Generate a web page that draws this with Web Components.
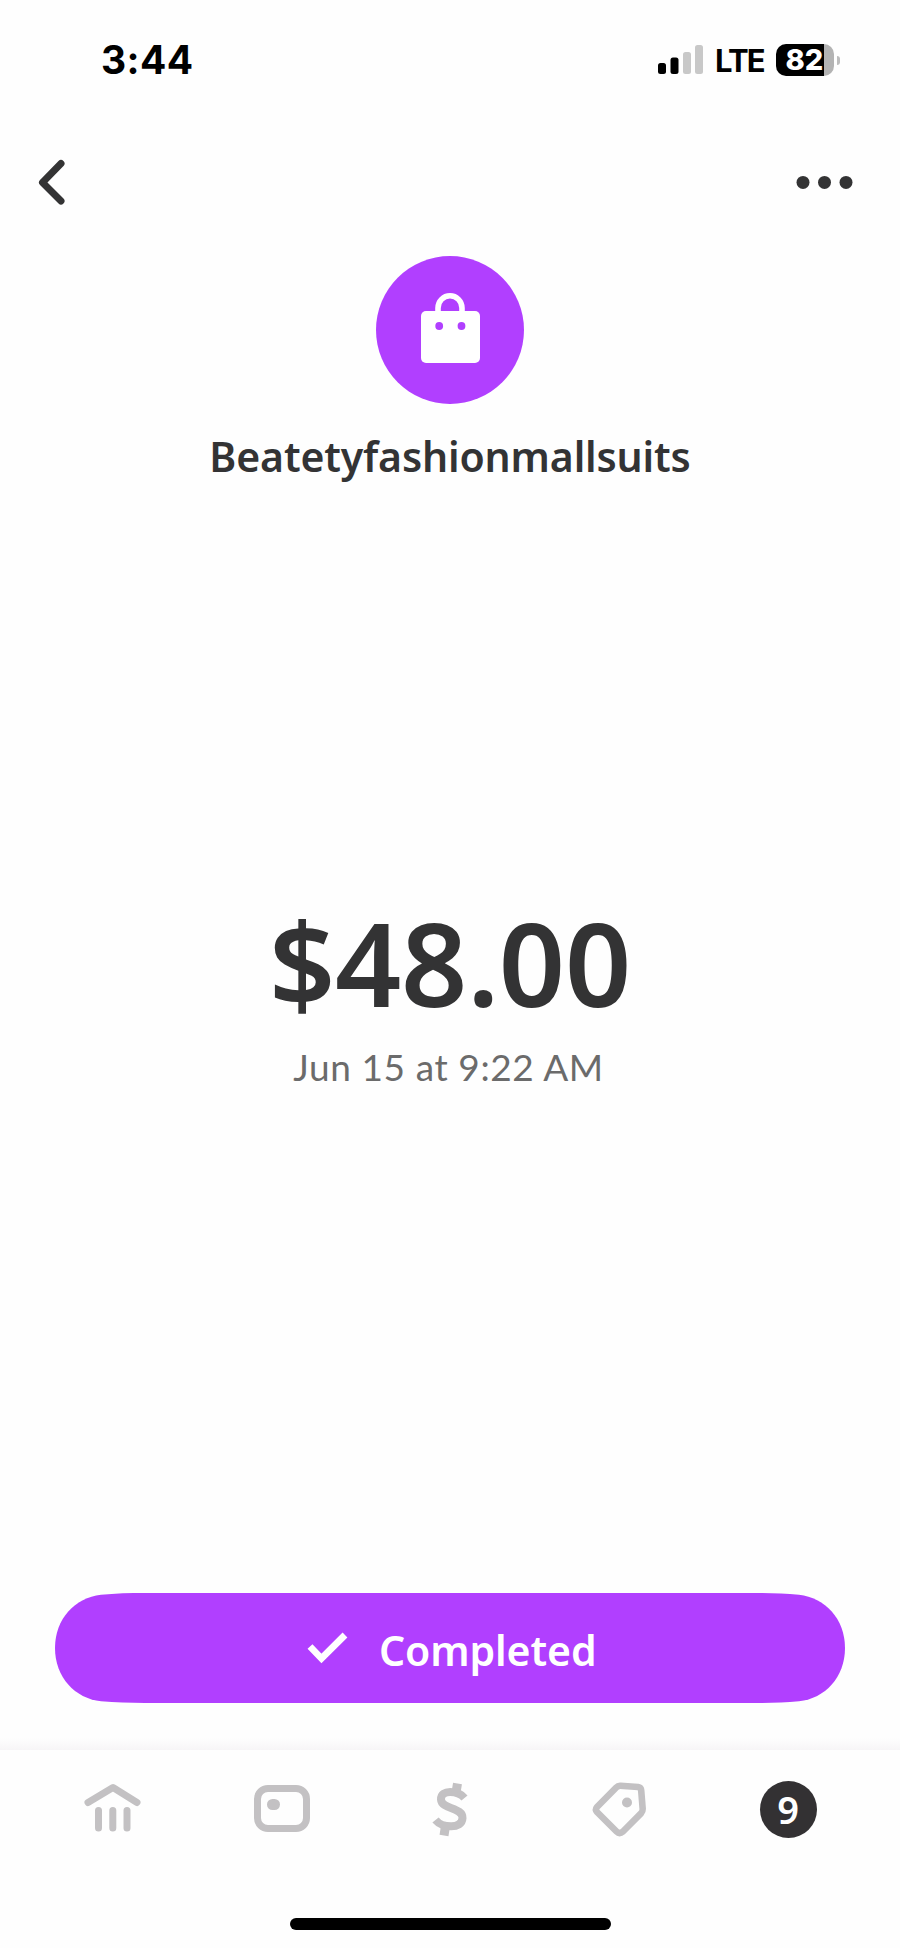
<!DOCTYPE html>
<html lang="en">
<head>
<meta charset="utf-8">
<title>Payment</title>
<style>
html,body{margin:0;background:#fefefe}
body{width:900px;height:1948px;overflow:hidden;font-family:Lato,"Noto Sans",sans-serif;color:#333334}
</style>
</head>
<body>
<payment-screen></payment-screen>
<script>
const define = (name, html) => customElements.define(name, class extends HTMLElement {
  constructor() {
    super();
    const t = document.createElement('template');
    t.innerHTML = html;
    this.attachShadow({ mode: 'open' }).append(t.content.cloneNode(true));
  }
});

define('status-bar', `<style>
:host{display:flex;height:120px;box-sizing:border-box;padding:0 60px 0 101px;align-items:center;justify-content:space-between;color:#000;font-family:Inter,sans-serif}
.time{font-size:39px;line-height:48px;font-weight:750;letter-spacing:.4px}
.right{display:flex;align-items:center}
.lte{font-size:31px;line-height:40px;font-weight:650;margin:2px 0 0 11px;width:61px;letter-spacing:-1.8px}
.bat{display:flex;align-items:center;gap:3px}
.cell{box-sizing:border-box;width:58px;height:32px;border-radius:10px;background:linear-gradient(90deg,#000 48px,#b3b3b3 48px);color:#fff;font-size:29px;line-height:32px;font-weight:800;text-align:center;letter-spacing:0;padding-right:1px}
.tip{width:3px;height:9px;border-radius:0 4px 4px 0;background:#bdbdbd}
</style>
<span class="time">3:44</span>
<div class="right">
<svg width="46" height="30" viewBox="0 0 46 30"><rect x="0" y="18" width="8" height="11" rx="2.500"/><rect x="12.500" y="12.500" width="8" height="16.500" rx="2.500"/><rect x="25" y="7" width="8" height="22" rx="2.500" fill="#c8c8c8"/><rect x="37" y="0" width="8" height="29" rx="2.500" fill="#c8c8c8"/></svg>
<span class="lte">LTE</span>
<div class="bat"><span class="cell">82</span><span class="tip"></span></div>
</div>`);

define('nav-header', `<style>
:host{display:flex;height:124px;box-sizing:border-box;padding:0 46px 0 37px;justify-content:space-between;align-items:center}
svg{display:block}
</style>
<svg width="32" height="48" viewBox="0 0 32 48" fill="none" stroke="#333334" stroke-width="7" stroke-linecap="round" stroke-linejoin="round"><path d="M24 5.500 5.500 24.500 24 43"/></svg>
<svg width="58" height="14" viewBox="0 0 58 14" fill="#333334"><circle cx="7" cy="7.400" r="6.500"/><circle cx="28.500" cy="7.400" r="6.500"/><circle cx="50" cy="7.400" r="6.500"/></svg>`);

define('merchant-profile', `<style>
:host{display:flex;flex-direction:column;align-items:center;height:261px;padding-top:12px}
svg{display:block}
h1{margin:26px 0 0;font:600 41px/52px "Noto Sans",sans-serif;letter-spacing:-.15px;white-space:nowrap}
</style>
<svg width="148" height="148" viewBox="0 0 148 148"><circle cx="74" cy="74" r="74" fill="#b13fff"/><path d="M62 57V52a12 12.200 0 0 1 24 0V57" fill="none" stroke="#fff" stroke-width="5.600"/><rect x="45" y="55" width="59" height="52" rx="5" fill="#fff"/><g fill="#b13fff"><circle cx="63.200" cy="70" r="3.900"/><circle cx="85.500" cy="70" r="3.900"/></g></svg>
<h1><slot></slot></h1>`);

define('payment-amount', `<style>
:host{display:flex;flex-direction:column;align-items:center;flex:1;justify-content:flex-start;padding-top:387px;white-space:nowrap}
.sum{font:650 116px/140px "Noto Sans",sans-serif;letter-spacing:-.3px}
.when{font-size:37px;line-height:48px;color:#6b6b6b;letter-spacing:.6px;margin:11px 3px 0 0}
</style>
<div class="sum"><slot name="sum"></slot></div><div class="when"><slot name="when"></slot></div>`);

define('status-pill', `<style>
:host{display:grid;width:790px;height:110px;margin:0 auto;flex:none}
.bg,.row{grid-area:1/1}
.row{display:flex;align-items:center;padding-left:252px;color:#fff}
.label{font:600 41px/50px "Noto Sans",sans-serif;margin:3px 0 0 30px;letter-spacing:-.1px}
.tick{margin-bottom:2px}
</style>
<svg class="bg" width="790" height="110" viewBox="0 0 790 111" preserveAspectRatio="none" fill="#b13fff"><path d="M0 55.500C0 26 20 4.500 46 1.700 60 .400 75 0 90 0H700C715 0 730 .400 744 1.700 770 4.500 790 26 790 55.500S770 106.500 744 109.300C730 110.600 715 111 700 111H90C75 111 60 110.600 46 109.300 20 106.500 0 85 0 55.500Z"/></svg>
<div class="row"><svg class="tick" width="42" height="34" viewBox="0 0 42 34" fill="none" stroke="#fff" stroke-width="6.800"><path d="M3 16.500 14.500 28.500 38 5"/></svg><span class="label"><slot></slot></span></div>`);

define('tab-bar', `<style>
:host{display:block;height:210px;flex:none;background:linear-gradient(#fdfcfd00,#f7f5f7) 0 0/100% 12px no-repeat}
.tabs{display:grid;grid-template-columns:repeat(5,169px);justify-content:center;justify-items:center;align-items:center;height:118px;padding:12px 0 0}
.tabs svg{display:block;margin-left:1px}
.badge{width:57px;height:57px;border-radius:50%;background:#333133;color:#fff;display:grid;place-items:center;font:600 38px/57px "Noto Sans",sans-serif}
.home{width:321px;height:12px;border-radius:6px;background:#000;margin:50px auto 0}
</style>
<div class="tabs">
<svg width="60" height="60" viewBox="0 0 60 60" fill="none" stroke="#c3c1c3" stroke-width="7" stroke-linecap="round" stroke-linejoin="round"><path d="M5 23.500 30 8.500 54 23.500M15.500 31.500v17.500M29.800 31.500v17.500M44 31.500v17.500"/></svg>
<svg width="60" height="60" viewBox="0 0 60 60"><rect x="5.500" y="9.500" width="49" height="40" rx="10.500" fill="none" stroke="#c3c1c3" stroke-width="7"/><rect x="15" y="20" width="13" height="11" rx="5.500" fill="#c3c1c3"/></svg>
<svg width="60" height="60" viewBox="0 0 60 60" fill="none" stroke="#c3c1c3" stroke-width="8"><path d="M43.500 19C37 11.500 19.500 10 20 20.500 20.500 30.500 42 28 41.500 39 41 50.500 21 49 14.500 41"/><path d="m36.500 4.500-1.500 9M24.500 47 23 56.500" stroke-width="9"/></svg>
<svg width="60" height="60" viewBox="0 0 60 60"><path d="M26.500 8.300Q28 6.500 30.500 6.700L48 8Q51 8.500 51.200 11.500L52.700 30Q52.800 32.500 51 34.300L33 52.500Q29.500 55.500 26.500 52.500L7 33Q5 30.500 7 28Z" fill="none" stroke="#c3c1c3" stroke-width="6.600" stroke-linejoin="round"/><circle cx="37" cy="23.500" r="5" fill="#c3c1c3"/></svg>
<span class="badge">9</span>
</div><div class="home"></div>`);

define('payment-screen', `<style>
:host{display:flex;flex-direction:column;width:900px;height:1948px;background:#fefefe}
merchant-profile{box-sizing:border-box;flex:none}
status-pill{margin-bottom:35px}
</style>
<status-bar></status-bar><nav-header></nav-header>
<merchant-profile>Beatetyfashionmallsuits</merchant-profile>
<payment-amount><span slot="sum">$48.00</span><span slot="when">Jun 15 at 9:22 AM</span></payment-amount>
<status-pill>Completed</status-pill><tab-bar></tab-bar>`);
</script>
</body>
</html>
